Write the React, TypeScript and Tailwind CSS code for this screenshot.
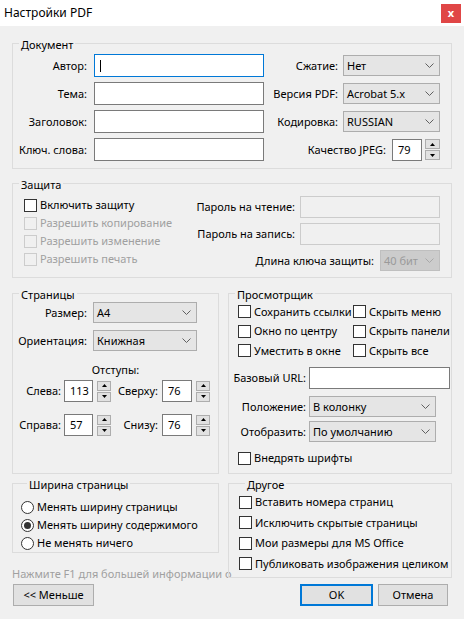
import React from 'react';

const Chevron = ({ color = '#606060' }: { color?: string }) => (
  <svg width="9" height="5" viewBox="0 0 9 5" className="shrink-0">
    <polyline points="0.5,0.5 4.5,4.5 8.5,0.5" fill="none" stroke={color} strokeWidth="1" />
  </svg>
);

function Select({ value, className = '', disabled = false }: { value: string; className?: string; disabled?: boolean }) {
  return (
    <div
      className={`flex items-center justify-between pl-[3px] pr-[5px] border ${
        disabled ? 'border-[#bfbfbf] bg-[#cccccc] text-[#9a9a9a]' : 'border-[#adadad] bg-[#e5e5e5]'
      } ${className}`}
    >
      <span className="whitespace-nowrap">{value}</span>
      <Chevron color={disabled ? '#a8a8a8' : '#606060'} />
    </div>
  );
}

function Input({ value = '', className = '', disabled = false, focused = false }: { value?: string; className?: string; disabled?: boolean; focused?: boolean }) {
  return (
    <div
      className={`flex items-center pl-[5px] border ${
        disabled ? 'border-[#cccccc] bg-[#f0f0f0]' : focused ? 'border-[#0078d7] bg-white' : 'border-[#7a7a7a] bg-white'
      } ${className}`}
    >
      {focused && <span className="w-[1px] h-[12px] bg-black" />}
      {value}
    </div>
  );
}

function Spinner({ className = '' }: { className?: string }) {
  return (
    <div className={`flex flex-col gap-[1px] ${className}`}>
      <div className="h-[10px] border border-[#adadad] bg-[#e1e1e1] flex items-center justify-center">
        <svg width="5" height="3" viewBox="0 0 5 3">
          <polygon points="2.5,0 5,3 0,3" fill="#000" />
        </svg>
      </div>
      <div className="h-[10px] border border-[#adadad] bg-[#e1e1e1] flex items-center justify-center">
        <svg width="5" height="3" viewBox="0 0 5 3">
          <polygon points="0,0 5,0 2.5,3" fill="#000" />
        </svg>
      </div>
    </div>
  );
}

function Check({ label, disabled = false, className = '' }: { label: string; disabled?: boolean; className?: string }) {
  return (
    <div className={`flex items-center gap-[3px] whitespace-nowrap ${disabled ? 'text-[#a0a0a0]' : ''} ${className}`}>
      <span className={`w-[13px] h-[13px] shrink-0 border ${disabled ? 'border-[#cccccc] bg-[#f0f0f0]' : 'border-[#333333] bg-white'}`} />
      {label}
    </div>
  );
}

function Radio({ label, checked = false }: { label: string; checked?: boolean }) {
  return (
    <div className="h-[18px] flex items-center gap-[3px] whitespace-nowrap">
      <span className="w-[13px] h-[13px] shrink-0 rounded-full border border-[#333333] bg-white flex items-center justify-center">
        {checked && <span className="w-[7px] h-[7px] rounded-full bg-[#333333]" />}
      </span>
      {label}
    </div>
  );
}

function Group({ title, className = '', children }: { title: string; className?: string; children: React.ReactNode }) {
  return (
    <fieldset className={`shrink-0 min-w-0 border border-[#dcdcdc] ${className}`}>
      <legend className="ml-[6px] px-[2px] h-[16px] leading-[20px]">{title}</legend>
      {children}
    </fieldset>
  );
}

export default function App() {
  return (
    <div className="w-[464px] h-[619px] bg-[#f0f0f0] overflow-hidden text-[11px] leading-[16px] text-black font-['Noto_Sans',sans-serif]">
      {/* Title bar */}
      <div className="h-[26px] bg-white flex items-center justify-between pl-[4px] pr-[3px]">
        <span className="text-[12px]">Настройки PDF</span>
        <div className="w-[20px] h-[19px] bg-[#e04646] flex items-center justify-center text-white text-[11px] font-bold leading-none pb-[2px]">
          x
        </div>
      </div>

      <div className="px-[12px]">
        {/* Документ */}
        <Group title="Документ" className="mt-[9px] pt-[3px] pb-[7px]">
          <div className="flex flex-col gap-[5px]">
            {[
              ['Автор:', 'Сжатие:', 'Нет'],
              ['Тема:', 'Версия PDF:', 'Acrobat 5.x'],
              ['Заголовок:', 'Кодировка:', 'RUSSIAN'],
            ].map(([l, r, v], i) => (
              <div key={l} className="h-[23px] flex items-center">
                <span className="w-[74px] text-right whitespace-nowrap">{l}</span>
                <Input focused={i === 0} className="ml-[7px] w-[170px] h-[23px]" />
                <div className="w-[176px] flex items-center justify-end">
                  <span className="whitespace-nowrap">{r}</span>
                  <Select value={v} className="ml-[5px] w-[97px] h-[21px]" />
                </div>
              </div>
            ))}
            <div className="h-[23px] flex items-center">
              <span className="w-[74px] text-right whitespace-nowrap">Ключ. слова:</span>
              <Input className="ml-[7px] w-[170px] h-[23px]" />
              <div className="w-[176px] flex items-center justify-end">
                <span className="whitespace-nowrap">Качество JPEG:</span>
                <Input value="79" className="ml-[6px] w-[30px] h-[22px]" />
                <Spinner className="ml-[3px] w-[15px]" />
              </div>
            </div>
          </div>
        </Group>

        {/* Защита */}
        <Group title="Защита" className="mt-[6px] pt-[5px] pb-[6px]">
          <div className="flex justify-between pl-[11px] pr-[11px]">
            <div className="flex flex-col">
              <Check label="Включить защиту" className="h-[18px]" />
              <Check label="Разрешить копирование" disabled className="h-[18px]" />
              <Check label="Разрешить изменение" disabled className="h-[18px]" />
              <Check label="Разрешить печать" disabled className="h-[18px]" />
            </div>
            <div className="flex flex-col items-end gap-[5px]">
              <div className="flex items-center">
                <span className="whitespace-nowrap">Пароль на чтение:</span>
                <Input disabled className="ml-[5px] w-[140px] h-[22px]" />
              </div>
              <div className="flex items-center">
                <span className="whitespace-nowrap">Пароль на запись:</span>
                <Input disabled className="ml-[5px] w-[140px] h-[22px]" />
              </div>
              <div className="flex items-center">
                <span className="whitespace-nowrap">Длина ключа защиты:</span>
                <Select value="40 бит" disabled className="ml-[6px] w-[60px] h-[21px]" />
              </div>
            </div>
          </div>
        </Group>

        {/* Страницы + Просмотрщик */}
        <div className="mt-[7px] flex gap-[9px] items-stretch">
          <Group title="Страницы" className="w-[207px] pt-[1px]">
            <div className="flex items-center h-[21px]">
              <span className="w-[74px] text-right">Размер:</span>
              <Select value="A4" className="ml-[6px] w-[104px] h-[21px]" />
            </div>
            <div className="mt-[7px] flex items-center h-[21px]">
              <span className="w-[74px] text-right">Ориентация:</span>
              <Select value="Книжная" className="ml-[6px] w-[104px] h-[21px]" />
            </div>
            <div className="mt-[11px] text-center">Отступы:</div>
            <div className="mt-[2px] flex items-center h-[22px]">
              <span className="w-[48px] text-right">Слева:</span>
              <Input value="113" className="ml-[3px] w-[29px] h-[22px]" />
              <Spinner className="ml-[4px] w-[14px]" />
              <span className="w-[47px] text-right">Сверху:</span>
              <Input value="76" className="ml-[4px] w-[30px] h-[22px]" />
              <Spinner className="ml-[4px] w-[14px]" />
            </div>
            <div className="mt-[12px] flex items-center h-[22px]">
              <span className="w-[48px] text-right">Справа:</span>
              <Input value="57" className="ml-[3px] w-[29px] h-[22px]" />
              <Spinner className="ml-[4px] w-[14px]" />
              <span className="w-[47px] text-right">Снизу:</span>
              <Input value="76" className="ml-[4px] w-[30px] h-[22px]" />
              <Spinner className="ml-[4px] w-[14px]" />
            </div>
          </Group>

          <Group title="Просмотрщик" className="w-[224px] pt-[1px] pb-[6px]">
            <div className="grid grid-cols-[115px_auto] pl-[9px]">
              <Check label="Сохранить ссылки" className="h-[19.5px]" />
              <Check label="Скрыть меню" className="h-[19.5px]" />
              <Check label="Окно по центру" className="h-[19.5px]" />
              <Check label="Скрыть панели" className="h-[19.5px]" />
              <Check label="Уместить в окне" className="h-[19.5px]" />
              <Check label="Скрыть все" className="h-[19.5px]" />
            </div>
            <div className="mt-[6.5px] flex items-center">
              <span className="w-[77px] text-right whitespace-nowrap">Базовый URL:</span>
              <Input className="ml-[3px] w-[141px] h-[22px]" />
            </div>
            <div className="mt-[7px] flex items-center">
              <span className="w-[77px] text-right whitespace-nowrap">Положение:</span>
              <Select value="В колонку" className="ml-[3px] w-[127px] h-[21px]" />
            </div>
            <div className="mt-[4px] flex items-center">
              <span className="w-[77px] text-right whitespace-nowrap">Отобразить:</span>
              <Select value="По умолчанию" className="ml-[3px] w-[127px] h-[21px]" />
            </div>
            <Check label="Внедрять шрифты" className="mt-[7px] h-[18px] pl-[9px]" />
          </Group>
        </div>

        {/* Ширина страницы + Другое */}
        <div className="mt-[1px] flex gap-[9px] items-start">
          <div className="w-[207px] shrink-0">
            <Group title="Ширина страницы" className="w-[207px] pt-[7px] pl-[8px]">
              <Radio label="Менять ширину страницы" />
              <Radio label="Менять ширину содержимого" checked />
              <Radio label="Не менять ничего" />
            </Group>
            <div className="mt-[13px] w-[215px] whitespace-nowrap text-[#a0a0a0]">
              Нажмите F1 для большей информации о
            </div>
          </div>
          <Group title="Другое" className="w-[224px] pt-[1px] pb-[3px] pl-[10px]">
            <Check label="Вставить номера страниц" className="h-[20.5px]" />
            <Check label="Исключить скрытые страницы" className="h-[20.5px]" />
            <Check label="Мои размеры для MS Office" className="h-[20.5px]" />
            <Check label="Публиковать изображения целиком" className="h-[20.5px]" />
          </Group>
        </div>

        {/* Buttons */}
        <div className="mt-[2px] flex justify-between">
          <button className="ml-[1px] w-[81px] h-[22px] border border-[#adadad] bg-[#e1e1e1]">&lt;&lt; Меньше</button>
          <div className="mr-[4px] flex gap-[5px]">
            <button className="w-[73px] h-[22px] border-2 border-[#0078d7] bg-[#e1e1e1]">OK</button>
            <button className="w-[70px] h-[22px] border border-[#adadad] bg-[#e1e1e1]">Отмена</button>
          </div>
        </div>
      </div>
    </div>
  );
}
